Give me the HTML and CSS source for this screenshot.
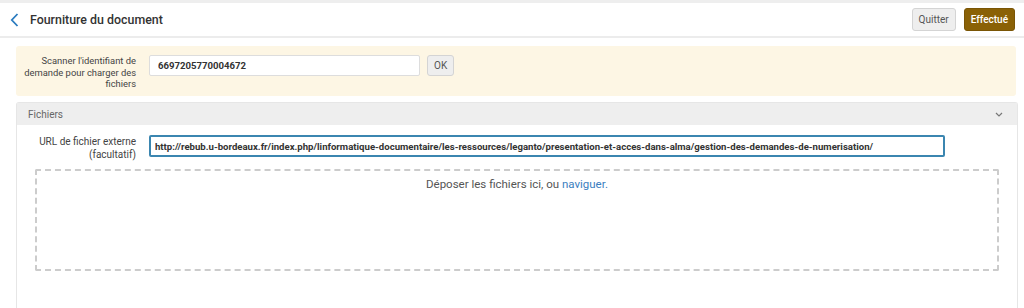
FILE: index.html
```html
<!DOCTYPE html>
<html lang="fr">
<head>
    <meta charset="UTF-8">
    <title>Fourniture du document</title>
    <link rel="stylesheet" href="styles.css">
</head>
<body>
    <header class="topbar">
        <div class="title">
            <a href="#" class="back">
                <svg width="9" height="14" viewBox="0 0 9 14"><path d="M7.5 1 L1.8 7 L7.5 13" fill="none" stroke="#2a7bbf" stroke-width="1.8"/></svg>
            </a>
            <span>Fourniture du document</span>
        </div>
        <div class="actions">
            <button class="btn">Quitter</button>
            <button class="btn btn-primary">Effectué</button>
        </div>
    </header>

    <div class="page">
        <div class="scan-box">
            <label class="label">Scanner l'identifiant de demande pour charger des fichiers</label>
            <input type="text" class="field scan-field" value="6697205770004672">
            <button class="btn btn-ok">OK</button>
        </div>

        <div class="panel">
            <div class="panel-head">
                <span>Fichiers</span>
                <svg width="8" height="5" viewBox="0 0 8 5"><path d="M1 1 L4 4 L7 1" fill="none" stroke="#777" stroke-width="1.2"/></svg>
            </div>
            <div class="panel-body">
                <div class="row">
                    <label class="label">URL de fichier externe (facultatif)</label>
                    <input type="text" class="field url-field" value="http://rebub.u-bordeaux.fr/index.php/linformatique-documentaire/les-ressources/leganto/presentation-et-acces-dans-alma/gestion-des-demandes-de-numerisation/">
                </div>
                <div class="dropzone">
                    Déposer les fichiers ici, ou <a href="#">naviguer.</a>
                </div>
            </div>
        </div>
    </div>
</body>
</html>
```
FILE: styles.css
```css
body {
    margin: 0;
    font-family: Roboto, "Liberation Sans", sans-serif;
    font-size: 10px;
    color: #333;
    background-color: #fff;
    border-top: 3px solid #eee;
}
.topbar {
    display: flex;
    justify-content: space-between;
    align-items: center;
    height: 33px;
    padding: 0 9px 0 10px;
    border-bottom: 2px solid #ececec;
}
.title {
    display: flex;
    align-items: center;
    gap: 11px;
    font-size: 12.4px;
    font-weight: 500;
    color: #333;
}
.back {
    display: flex;
}
.actions {
    display: flex;
    gap: 8px;
}
.btn {
    font-family: inherit;
    font-size: 10px;
    height: 23px;
    padding: 0 6px;
    border: 1px solid #d4d4d4;
    border-radius: 3px;
    background-color: #eee;
    color: #555;
    cursor: pointer;
}
.btn-primary {
    background-color: #8a6106;
    border-color: #7a5505;
    color: #fff;
    font-weight: 500;
}
.page {
    padding: 8px 8px 0 16px;
}
.scan-box {
    display: flex;
    align-items: flex-start;
    width: 1000px;
    height: 50px;
    box-sizing: border-box;
    padding: 9px 0 0 4px;
    background-color: #fdf6e4;
    border-radius: 3px;
}
.label {
    width: 116px;
    flex-shrink: 0;
    text-align: right;
    font-size: 9.4px;
    line-height: 11.5px;
    color: #444;
    margin-right: 13px;
}
.field {
    font-family: inherit;
    font-size: 9.6px;
    font-weight: bold;
    color: #333;
    height: 21px;
    box-sizing: border-box;
    padding: 0 8px;
    border: 1px solid #ddd;
    border-radius: 2px;
    background: #fff;
    outline: none;
}
.scan-field {
    width: 271px;
}
.btn-ok {
    height: 21px;
    margin-left: 7px;
    padding: 0 6px;
}
.panel {
    width: 1000px;
    margin-top: 6px;
    border: 1px solid #e6e6e6;
    border-bottom: none;
    border-radius: 3px 3px 0 0;
}
.panel-head {
    display: flex;
    justify-content: space-between;
    align-items: center;
    height: 22px;
    padding: 0 14px 0 11px;
    background-color: #eee;
    color: #666;
}
.panel-body {
    padding: 10px 18px 40px 3px;
}
.row {
    display: flex;
    align-items: flex-start;
}
.row .label {
    font-size: 10px;
    line-height: 13px;
}
.url-field {
    width: 796px;
    height: 22px;
    border: 2px solid #3b86b0;
    padding: 0 4px;
}
.dropzone {
    margin: 8px 0 0 15px;
    height: 102px;
    box-sizing: border-box;
    border: 2px dashed #ccc;
    border-radius: 2px;
    text-align: center;
    padding-top: 6px;
    font-size: 11.5px;
    color: #555;
}
.dropzone a {
    color: #3a7ec0;
    text-decoration: none;
}
```
